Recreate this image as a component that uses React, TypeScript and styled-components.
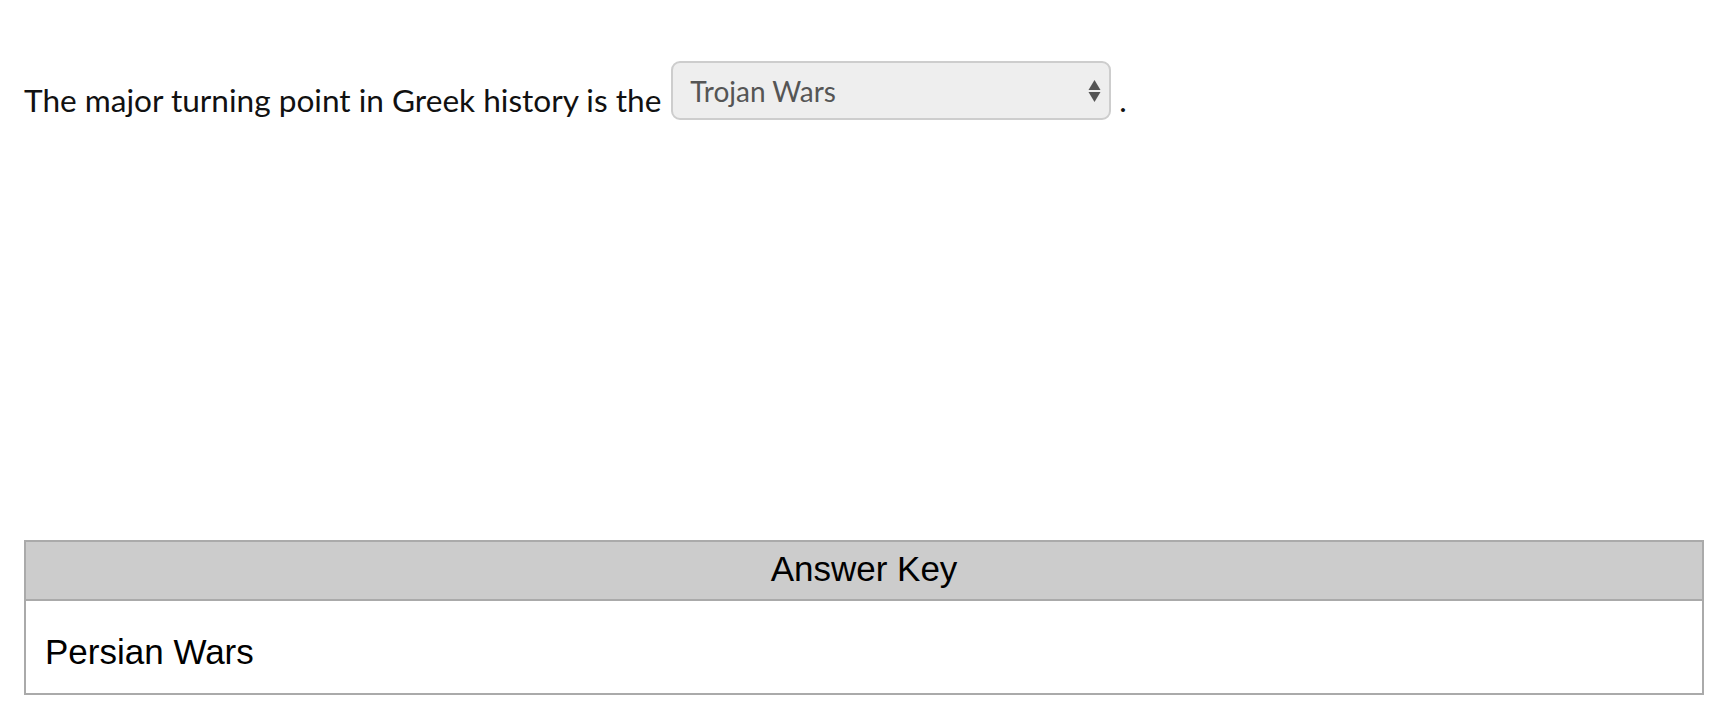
import React from "react";
import styled, { createGlobalStyle } from "styled-components";

const GlobalStyle = createGlobalStyle`
  html, body {
    margin: 0;
    padding: 0;
    background: #ffffff;
  }
`;

const Page = styled.div`
  padding: 0 14px 0 24px;
  height: 718px;
  box-sizing: border-box;
  display: flex;
  flex-direction: column;
`;

const Question = styled.p`
  margin: 61px 0 0;
  font-family: Lato, "Open Sans", sans-serif;
  font-size: 31.6px;
  line-height: 40px;
  color: #111;
  white-space: nowrap;
`;

const Dropdown = styled.span`
  display: inline-flex;
  align-items: center;
  justify-content: space-between;
  box-sizing: border-box;
  width: 440px;
  height: 59px;
  margin: 0 8px 0 10px;
  padding: 0 8px 0 17px;
  vertical-align: 10px;
  border: 2px solid #cdcdcd;
  border-radius: 9px;
  background: #eeeeee;
  color: #555555;
  font-size: 28px;
`;

const Arrows = () => (
  <svg width="13" height="24" viewBox="0 0 13 24">
    <path d="M6.5 1 L12.5 11 H0.5 Z" fill="#555" />
    <path d="M6.5 23 L12.5 13 H0.5 Z" fill="#555" />
  </svg>
);

const KeyTable = styled.table`
  margin-top: auto;
  margin-bottom: 23px;
  width: 1680px;
  border-collapse: collapse;
  border: 2px solid #aaaaaa;
  font-family: "Liberation Sans", Arial, sans-serif;
  font-size: 35px;
  line-height: 40px;
  color: #000;
`;

const HeadCell = styled.th`
  padding: 7px 0 10px;
  background: #cccccc;
  border-bottom: 2px solid #aaaaaa;
  font-weight: normal;
  text-align: center;
`;

const BodyCell = styled.td`
  padding: 31px 19px 21px;
  vertical-align: top;
  text-align: left;
`;

export default function App() {
  return (
    <>
      <GlobalStyle />
      <Page>
        <Question>
          The major turning point in Greek history is the
          <Dropdown>
            Trojan Wars
            <Arrows />
          </Dropdown>
          .
        </Question>
        <KeyTable>
          <thead>
            <tr>
              <HeadCell>Answer Key</HeadCell>
            </tr>
          </thead>
          <tbody>
            <tr>
              <BodyCell>Persian Wars</BodyCell>
            </tr>
          </tbody>
        </KeyTable>
      </Page>
    </>
  );
}
